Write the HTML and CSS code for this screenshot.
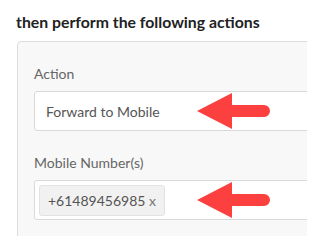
FILE: index.html
```html
<!DOCTYPE html>
<html>
<head>
<meta charset="utf-8">
<link rel="stylesheet" href="styles.css">
</head>
<body>
<div class="page">
  <h2 class="title">then perform the following actions</h2>
  <div class="panel">
    <div class="field">
      <label class="label">Action</label>
      <div class="input">
        <span class="value">Forward to Mobile</span>
        <svg class="arrow" width="76" height="38" viewBox="0 0 76 38"><path d="M0 19 L35 1 L35 13 L67 13 A6 6 0 0 1 67 25 L35 25 L35 37 Z" fill="#fc4040"/></svg>
      </div>
    </div>
    <div class="field">
      <label class="label">Mobile Number(s)</label>
      <div class="input tags">
        <span class="chip">+61489456985 <span class="x">x</span></span>
        <svg class="arrow" width="76" height="38" viewBox="0 0 76 38"><path d="M0 19 L35 1 L35 13 L67 13 A6 6 0 0 1 67 25 L35 25 L35 37 Z" fill="#fc4040"/></svg>
      </div>
    </div>
  </div>
</div>
</body>
</html>
```
FILE: styles.css
```css
html, body {
  margin: 0;
  padding: 0;
  background: #ffffff;
  overflow: hidden;
}
.page {
  width: 307px;
  height: 236px;
  overflow: hidden;
  font-family: Lato, "Noto Sans", sans-serif;
}
.title {
  margin: 0;
  padding: 11px 0 0 16px;
  font-size: 15.8px;
  line-height: 22px;
  font-weight: 700;
  color: #222222;
}
.panel {
  margin: 8px 0 0 17px;
  width: 340px;
  height: 220px;
  background: #f8f8f8;
  border: 1px solid #dddddd;
  border-radius: 4px;
  padding: 22px 16px 0 16px;
  box-sizing: border-box;
}
.field {
  display: flex;
  flex-direction: column;
  margin-bottom: 22px;
}
.label {
  font-size: 14px;
  line-height: 20px;
  color: #666666;
  margin-bottom: 7px;
}
.input {
  position: relative;
  height: 40px;
  background: #ffffff;
  border: 1px solid #d9d9d9;
  border-radius: 3px;
  box-sizing: border-box;
  display: flex;
  align-items: center;
  padding: 0 11px;
  font-size: 14px;
  color: #555555;
}
.tags {
  padding: 0 4px;
}
.chip {
  display: flex;
  align-items: center;
  height: 31px;
  padding: 0 8px 0 8px;
  background: #f1f1f1;
  border: 1px solid #e2e2e2;
  border-radius: 3px;
  box-sizing: border-box;
  font-size: 14px;
  color: #555555;
  white-space: pre;
}
.x {
  color: #777777;
}
.arrow {
  position: absolute;
  left: 162px;
  top: 0px;
}
```
